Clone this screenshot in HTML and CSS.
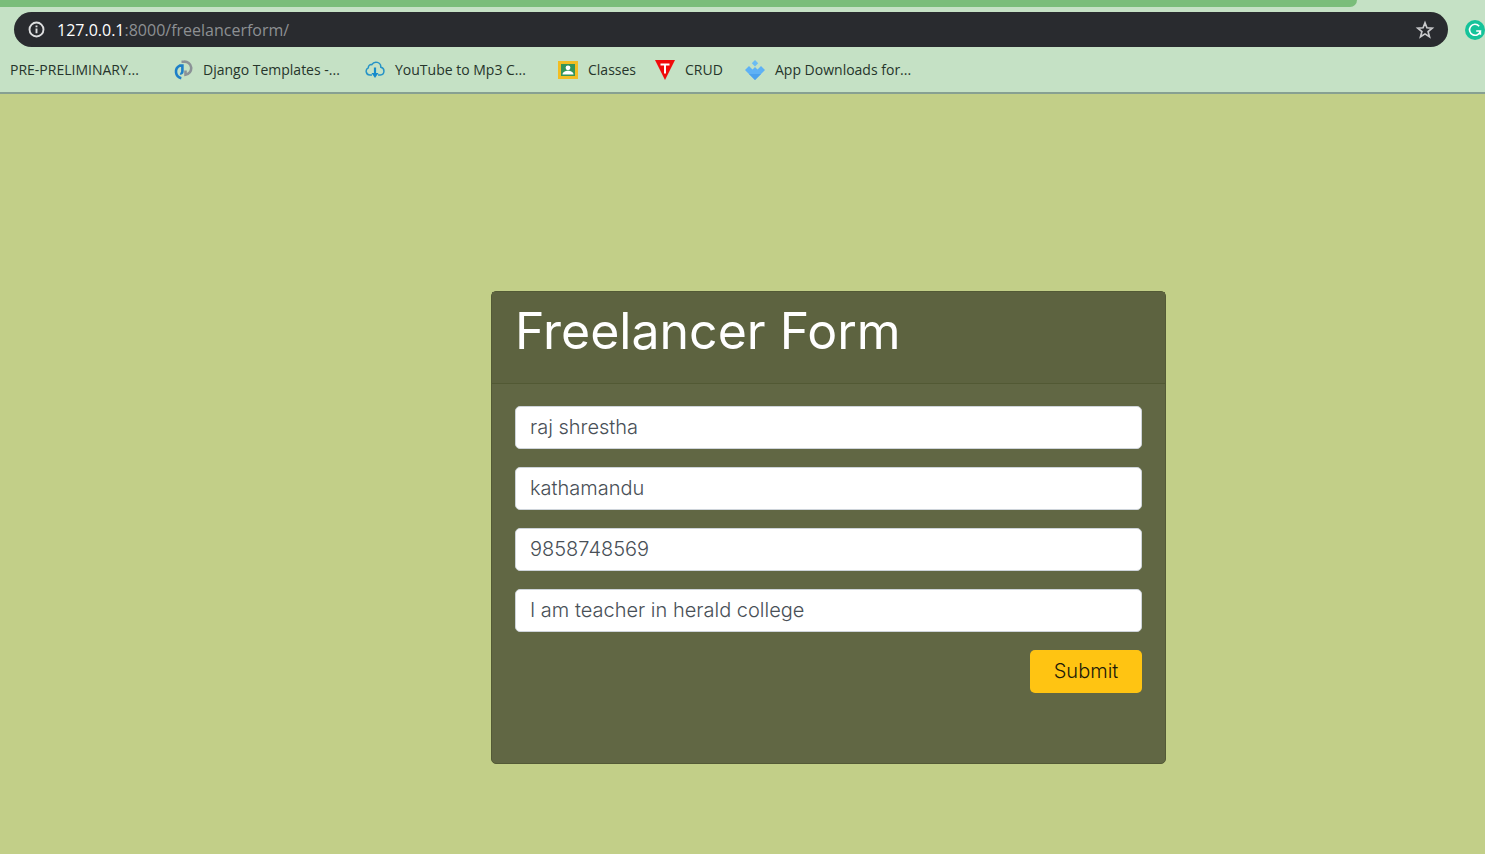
FILE: index.html
```html
<!DOCTYPE html>
<html lang="en">
<head>
<meta charset="utf-8">
<title>Freelancer Form</title>
<link rel="stylesheet" href="styles.css">
</head>
<body>
<header class="browser">
  <div class="tab-strip"></div>
  <div class="toolbar">
    <div class="address-bar">
      <svg class="info-icon" viewBox="0 0 18 18" aria-hidden="true"><circle cx="9" cy="9" r="7.400" fill="none" stroke="currentColor" stroke-width="2"/><path d="M9 8v5M9 4.800v1.900" stroke="currentColor" stroke-width="2"/></svg>
      <span class="url"><span class="host">127.0.0.1</span>:8000/freelancerform/</span>
      <button class="star" type="button" aria-label="Bookmark this page"><svg viewBox="0 0 20 20" aria-hidden="true"><path d="M10 2.800l1.900 5 5.300.4-4.100 3.400 1.400 5.200-4.500-2.900-4.500 2.900 1.400-5.200L2.800 8.200l5.300-.4z" fill="none" stroke="currentColor" stroke-width="1.700"/></svg></button>
    </div>
    <button class="extension" type="button" aria-label="Grammar extension"><svg viewBox="0 0 20 20" aria-hidden="true"><circle cx="10" cy="10" r="10" fill="#15c39a"/><path d="M14.200 6.200A5.500 5.500 0 1 0 15.400 11H11.200M15.400 10.200v4.600" fill="none" stroke="#fff" stroke-width="1.600"/></svg></button>
  </div>
  <nav class="bookmarks" aria-label="Bookmarks">
    <a class="bookmark" href="#">PRE-PRELIMINARY...</a>
    <a class="bookmark" href="#"><svg viewBox="0 0 20 20" aria-hidden="true"><path d="M8.500 1.700h2.300a6.500 6.500 0 0 1 1.700 13v-4.200" fill="none" stroke="#8b9297" stroke-width="2.600"/><path d="M8.300 18.200A6.700 6.700 0 0 1 6.800 5.600h2.600v5.600c0 1.800-1.200 2.600-2.200 2.200" fill="none" stroke="#1d7fc8" stroke-width="2.600"/></svg>Django Templates -...</a>
    <a class="bookmark" href="#"><svg viewBox="0 0 20 20" aria-hidden="true"><path d="M7 15H4.800A3.800 3.800 0 0 1 3.300 7.800C3.300 5.500 5 4.300 6.800 4.700 9.500.2 16 2.200 15.800 7.200c4.300.8 4.200 7.300-.4 7.800H13" fill="none" stroke="#2693c7" stroke-width="1.500"/><path d="M10 7.500v7" stroke="#168bcc" stroke-width="2.200"/><path d="M6.500 13h7L10 18z" fill="#168bcc"/></svg>YouTube to Mp3 C...</a>
    <a class="bookmark" href="#"><svg viewBox="0 0 20 20" aria-hidden="true"><path d="M0 1h20v18H0z" fill="#f2bd22"/><path d="M3 4h14v12H3z" fill="#34945a"/><circle cx="10" cy="7.800" r="2.400" fill="#fff"/><path d="M4.500 14.500c.3-5 10.700-5 11 0z" fill="#fff"/></svg>Classes</a>
    <a class="bookmark" href="#"><svg viewBox="0 0 20 20" aria-hidden="true"><path d="M0 0h20L10 20z" fill="#f00b0b"/><path d="M5.500 4.500h9M10 4.500v9" stroke="#fff" stroke-width="2"/></svg>CRUD</a>
    <a class="bookmark" href="#"><svg viewBox="0 0 20 20" aria-hidden="true"><path d="M10 0l3.200 3.200L10 6.400 6.800 3.200z" fill="#6bbcf3"/><path d="M0 10l4-4 3.500 3.500L10 7l2.500 2.500L16 6l4 4-10 10z" fill="#5eb1f5"/><path d="M4 14h12l-6 6z" fill="#4ba1ed"/></svg>App Downloads for...</a>
  </nav>
</header>
<main class="page">
  <section class="card">
    <header class="card-header"><h1>Freelancer Form</h1></header>
    <form class="card-body">
      <input class="field" type="text" name="name" aria-label="Name" value="raj shrestha">
      <input class="field" type="text" name="address" aria-label="Address" value="kathamandu">
      <input class="field" type="text" name="phone" aria-label="Phone" value="9858748569">
      <input class="field" type="text" name="description" aria-label="Description" value="I am teacher in herald college">
      <button class="submit" type="submit">Submit</button>
    </form>
  </section>
</main>
</body>
</html>
```
FILE: styles.css
```css
* { box-sizing: border-box; }
body {
  display: flex;
  flex-direction: column;
  min-height: 100vh;
  margin: 0;
  background: #c2cf88;
  font-family: Inter, sans-serif;
}
button { border: 0; padding: 0; background: none; font: inherit; }
svg { display: block; flex: none; }

.browser {
  background: #c5e1c5;
  border-bottom: 2px solid #87a092;
  font-family: "Open Sans", sans-serif;
  overflow: hidden;
}
.tab-strip {
  height: 7px;
  margin-right: 128px;
  background: #7abd7a;
  border-bottom-right-radius: 8px;
}
.toolbar { display: flex; align-items: center; gap: 17px; padding: 5px 0 0 14px; }
.address-bar {
  display: flex;
  flex: 1;
  align-items: center;
  gap: 12px;
  height: 35px;
  padding: 0 13px 0 14px;
  border-radius: 18px;
  background: #292b2f;
}
.info-icon { width: 17px; height: 17px; color: #dedfe0; }
.url { flex: 1; color: #8d9093; font-size: 16px; line-height: 24px; }
.host { color: #fff; }
.star { color: #c9cacc; }
.star svg, .extension svg { width: 20px; height: 20px; }
.bookmarks {
  display: grid;
  grid-template-columns: 163px 192px 193px 97px 90px auto;
  align-items: center;
  height: 45px;
  padding-left: 10px;
}
.bookmark {
  display: flex;
  align-items: center;
  gap: 10px;
  color: #26352b;
  font-size: 14px;
  line-height: 20px;
  text-decoration: none;
  white-space: nowrap;
}
.bookmark svg { width: 20px; height: 20px; }

.page {
  display: flex;
  flex: 1;
  justify-content: center;
  align-items: flex-start;
  padding: 197px 0 90px 172px;
}
.card {
  flex: 0 1 675px;
  min-height: 473px;
  border: 1px solid #535a36;
  border-radius: 5px;
  background: #616744;
}
.card-header {
  height: 92px;
  padding: 9px 23px;
  border-bottom: 1px solid #525934;
  background: #5d6340;
}
.card-header h1 { margin: 0; color: #fff; font-size: 50px; font-weight: 400; line-height: 60px; }
.card-body { display: flex; flex-direction: column; gap: 18px; padding: 22px 23px; }
.field {
  width: 100%;
  height: 43px;
  padding: 0 14px 2px;
  border: 1px solid #ced4da;
  border-radius: 5px;
  background: #fff;
  color: #495057;
  font: 300 20px/26px Inter, sans-serif;
}
.submit {
  align-self: flex-end;
  width: 112px;
  height: 43px;
  padding-bottom: 2px;
  border-radius: 5px;
  background: #ffc412;
  color: #211a08;
  font-size: 20px;
  font-weight: 300;
}
```
